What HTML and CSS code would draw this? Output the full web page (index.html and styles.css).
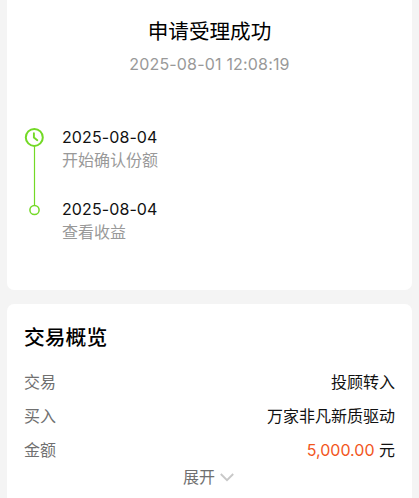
FILE: index.html
```html
<!DOCTYPE html>
<html lang="zh-CN">
<head>
    <meta charset="UTF-8">
    <meta name="viewport" content="width=device-width, initial-scale=1.0">
    <title>申请受理成功</title>
    <link rel="stylesheet" href="styles.css">
</head>
<body>

<section class="card result">
    <h1>申请受理成功</h1>
    <p class="time">2025-08-01 12:08:19</p>

    <div class="timeline">
        <svg class="track" width="20" height="90" viewBox="0 0 20 90" fill="none" stroke="#73d926">
            <path d="M10.5 19v59" stroke-width="1.2"/>
            <circle cx="10.3" cy="10.4" r="8.5" stroke-width="2"/>
            <path d="M9.9 6.2v4.4l3.4 2.6" stroke-width="1.9" stroke-linecap="round"/>
            <circle cx="10.5" cy="83" r="4.6" stroke-width="1.5"/>
        </svg>
        <ul class="steps">
            <li>
                <span class="date">2025-08-04</span>
                <span class="desc">开始确认份额</span>
            </li>
            <li>
                <span class="date">2025-08-04</span>
                <span class="desc">查看收益</span>
            </li>
        </ul>
    </div>
</section>

<section class="card overview">
    <h2>交易概览</h2>
    <div class="row">
        <span class="label">交易</span>
        <span>投顾转入</span>
    </div>
    <div class="row">
        <span class="label">买入</span>
        <span>万家非凡新质驱动</span>
    </div>
    <div class="row">
        <span class="label">金额</span>
        <span><span class="amount">5,000.00</span> 元</span>
    </div>
    <div class="more">
        <span>展开</span>
        <svg width="14" height="9" viewBox="0 0 14 9" fill="none" stroke="#c8c8c8" stroke-width="1.9">
            <path d="M0.8 1l6.2 6.2L13.2 1"/>
        </svg>
    </div>
</section>

</body>
</html>
```
FILE: styles.css
```css
body {
    font-family: Inter, "Noto Sans CJK SC", sans-serif;
    font-size: 16px;
    color: #111;
    background-color: #f4f4f4;
    margin: 0;
    padding: 0 7px;
    height: 498px;
    overflow: hidden;
}

h1, h2, p, ul {
    margin: 0;
    padding: 0;
}

.card {
    background-color: #fff;
    box-sizing: border-box;
}

/* Result card */
.result {
    height: 290px;
    padding-top: 17px;
    border-radius: 0 0 7px 7px;
}

h1 {
    font-size: 20.6px;
    font-weight: 400;
    line-height: 30px;
    text-align: center;
    color: #000;
}

.time {
    margin-top: 5px;
    line-height: 24px;
    letter-spacing: 0.18px;
    text-align: center;
    color: #999;
}

.timeline {
    display: flex;
    gap: 18px;
    margin-top: 49px;
    padding-left: 17px;
}

.track {
    margin-top: 2px;
}

.steps {
    list-style: none;
}

.steps li {
    height: 72px;
}

.date, .desc {
    display: block;
}

.date {
    line-height: 24px;
    letter-spacing: 0.1px;
}

.desc {
    line-height: 23px;
    color: #999;
}

/* Overview card */
.overview {
    height: 200px;
    margin-top: 14px;
    padding: 19px 17px 0;
    border-radius: 7px 7px 0 0;
}

h2 {
    font-size: 20.8px;
    font-weight: 500;
    line-height: 30px;
    margin-bottom: 12px;
    color: #000;
}

.row {
    display: flex;
    justify-content: space-between;
    line-height: 34px;
}

.label {
    color: #707070;
}

.amount {
    color: #f2561d;
}

.more {
    display: flex;
    justify-content: center;
    align-items: center;
    gap: 5px;
    margin: -2px 2px 0 0;
    line-height: 24px;
    color: #707070;
}
```
